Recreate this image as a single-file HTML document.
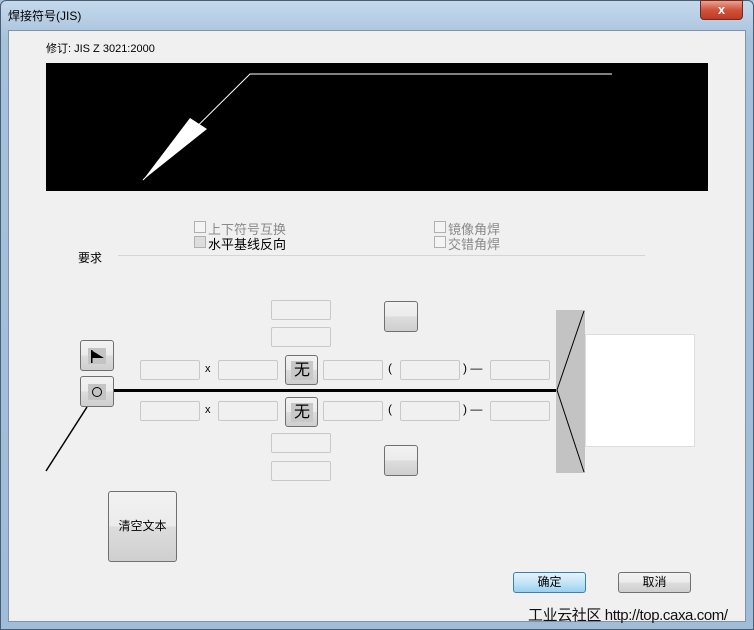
<!DOCTYPE html>
<html><head><meta charset="utf-8"><style>
*{margin:0;padding:0;box-sizing:border-box}
body{width:754px;height:630px;overflow:hidden;background:#a9c4de;font-family:"Liberation Sans","Noto Sans CJK SC",sans-serif;font-size:12px;position:relative}
.a{position:absolute}
.frame{left:0;top:0;width:754px;height:630px;background:linear-gradient(#c5d9ec,#a6c1dc 40px,#9fbcd8);border:1px solid #4a5d73;border-radius:6px 6px 0 0}
.client{left:8px;top:30px;width:738px;height:592px;background:#f0f0f0;border:1px solid #8193a8}
.tb{border:1px solid #c8c8c8;background:#f0f0f0;height:20px;width:60px;border-radius:2px}
.btn{border:1px solid #707070;border-radius:3px;background:linear-gradient(#f2f2f2,#ebebeb 50%,#dddddd 50%,#cfcfcf)}
.cb{width:12px;height:12px;border:1px solid #b0b0b0;background:#f4f4f4}
.g{color:#8a8a8a}
</style></head><body>
<div class="a frame"></div>
<div class="a" style="left:8px;top:7px;font-size:12px;color:#000">焊接符号(JIS)</div>
<div class="a" style="left:700px;top:0;width:43px;height:20px;border:1px solid #6d2a22;border-radius:0 0 4px 4px;background:linear-gradient(#e8a393,#d0523c 50%,#c13a22);color:#fff;font-weight:bold;text-align:center;font-size:13px;line-height:18px">x</div>
<div class="a client"></div>
<div class="a" style="left:46px;top:40px;font-size:11px">修订: JIS Z 3021:2000</div>
<svg class="a" style="left:46px;top:63px" width="662" height="128"><rect width="662" height="128" fill="#000"/>
<polyline points="97,117 204,11 566,11" stroke="#fff" fill="none" stroke-width="1"/>
<polygon points="97,117 144,55 161,66" fill="#fff"/></svg>
<div class="a cb" style="left:194px;top:221px"></div><div class="a g" style="left:208px;top:219px;font-size:13px">上下符号互换</div>
<div class="a cb" style="left:194px;top:236px;background:#ddd"></div><div class="a" style="left:208px;top:234px;font-size:13px">水平基线反向</div>
<div class="a cb" style="left:434px;top:221px"></div><div class="a g" style="left:448px;top:219px;font-size:13px">镜像角焊</div>
<div class="a cb" style="left:434px;top:236px"></div><div class="a g" style="left:448px;top:234px;font-size:13px">交错角焊</div>
<div class="a" style="left:78px;top:249px;font-size:12px">要求</div>
<div class="a" style="left:118px;top:255px;width:527px;height:1px;background:#d5d5d5"></div>
<div class="a tb" style="left:271px;top:300px"></div>
<div class="a tb" style="left:271px;top:327px"></div>
<div class="a tb" style="left:271px;top:433px"></div>
<div class="a tb" style="left:271px;top:461px"></div>
<div class="a btn" style="left:384px;top:301px;width:34px;height:31px"></div>
<div class="a btn" style="left:384px;top:445px;width:34px;height:31px"></div>
<div class="a btn" style="left:80px;top:340px;width:34px;height:31px"><div style="position:absolute;left:7px;top:7px;width:18px;height:16px;background:#c4c4c4"></div><svg style="position:absolute;left:9px;top:8px" width="14" height="14"><rect x="1" y="1" width="1.5" height="13" fill="#000"/><polygon points="1,1 14,9 1,9" fill="#000"/></svg></div>
<div class="a btn" style="left:80px;top:376px;width:34px;height:31px"><div style="position:absolute;left:7px;top:7px;width:18px;height:16px;background:#c4c4c4"></div><div style="position:absolute;left:11px;top:10px;width:10px;height:10px;border:1px solid #000;border-radius:50%"></div></div>
<svg class="a" style="left:40px;top:380px" width="80" height="100"><line x1="47" y1="27" x2="6" y2="91" stroke="#000" stroke-width="1.5"/></svg>
<div class="a" style="left:114px;top:389px;width:443px;height:3px;background:#000"></div>
<div class="a tb" style="left:140px;top:360px"></div><div class="a" style="left:205px;top:363px;font-size:11px">x</div><div class="a tb" style="left:218px;top:360px"></div>
<div class="a btn" style="left:285px;top:355px;width:33px;height:30px"><div style="position:absolute;left:5px;top:5px;width:22px;height:19px;background:#c8c8c8;font-size:16px;text-align:center;line-height:19px">无</div></div>
<div class="a tb" style="left:323px;top:360px"></div><div class="a" style="left:388px;top:361px;font-size:12px">(</div><div class="a tb" style="left:400px;top:360px"></div><div class="a" style="left:463px;top:361px;font-size:12px">) —</div><div class="a tb" style="left:490px;top:360px"></div>
<div class="a tb" style="left:140px;top:401px"></div><div class="a" style="left:205px;top:404px;font-size:11px">x</div><div class="a tb" style="left:218px;top:401px"></div>
<div class="a btn" style="left:285px;top:397px;width:33px;height:30px"><div style="position:absolute;left:5px;top:5px;width:22px;height:19px;background:#c8c8c8;font-size:16px;text-align:center;line-height:19px">无</div></div>
<div class="a tb" style="left:323px;top:401px"></div><div class="a" style="left:388px;top:402px;font-size:12px">(</div><div class="a tb" style="left:400px;top:401px"></div><div class="a" style="left:463px;top:402px;font-size:12px">) —</div><div class="a tb" style="left:490px;top:401px"></div>
<svg class="a" style="left:556px;top:310px" width="30" height="164"><rect width="29" height="163" fill="#c3c3c3"/><polyline points="28,1 1,80 28,162" stroke="#000" fill="none"/></svg>
<div class="a" style="left:585px;top:334px;width:110px;height:113px;background:#fff;border:1px solid #ddd"></div>
<div class="a btn" style="left:108px;top:491px;width:69px;height:71px;text-align:center;line-height:69px;font-size:12px">清空文本</div>
<div class="a" style="left:513px;top:572px;width:73px;height:21px;border:1px solid #3c7fb1;border-radius:3px;background:linear-gradient(#e5f4fc,#c4e5f6 50%,#98d1ef);text-align:center;line-height:19px">确定</div>
<div class="a btn" style="left:618px;top:572px;width:73px;height:21px;text-align:center;line-height:19px">取消</div>
<div class="a" style="left:528px;top:604px;font-size:15px;color:#111;letter-spacing:-0.4px">工业云社区 http://top.caxa.com/</div>
</body></html>
